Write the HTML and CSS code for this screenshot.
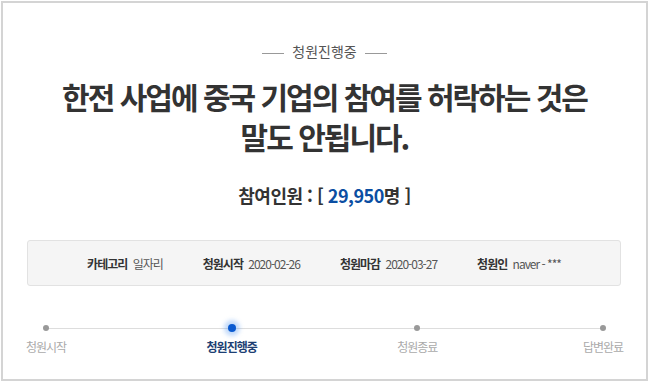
FILE: index.html
```html
<!DOCTYPE html>
<html lang="ko">
<head>
    <meta charset="UTF-8">
    <title>청원진행중</title>
    <link rel="stylesheet" href="styles.css">
</head>
<body>

<div class="petition">
    <div class="status"><span>청원진행중</span></div>

    <h1 class="title">한전 사업에 중국 기업의 참여를 허락하는 것은<br>말도 안됩니다.</h1>

    <div class="count">참여인원 : [ <span class="num">29,950</span>명 ]</div>

    <ul class="info">
        <li><b>카테고리</b> 일자리</li>
        <li><b>청원시작</b> 2020-02-26</li>
        <li><b>청원마감</b> 2020-03-27</li>
        <li><b>청원인</b> naver - ***</li>
    </ul>

    <ol class="steps">
        <li><i class="dot"></i>청원시작</li>
        <li class="on"><i class="dot"></i>청원진행중</li>
        <li><i class="dot"></i>청원종료</li>
        <li><i class="dot"></i>답변완료</li>
    </ol>
</div>

</body>
</html>
```

FILE: styles.css
```css
body {
    margin: 0;
    padding: 1px;
    font-family: "Noto Sans CJK KR", "Noto Sans", sans-serif;
    color: #333;
    background-color: white;
}
.petition {
    width: 643px;
    height: 376px;
    border: 2px solid #d4d4d4;
}
.status {
    margin-top: 38px;
    text-align: center;
    font-size: 14px;
    color: #555;
    line-height: 20px;
}
.status span::before,
.status span::after {
    content: "";
    display: inline-block;
    width: 22px;
    height: 1px;
    background-color: #999;
    vertical-align: middle;
    margin: 0 8px;
}
.title {
    margin: 15px 0 0;
    text-align: center;
    font-size: 30px;
    font-weight: 700;
    line-height: 40px;
    letter-spacing: -2px;
    color: #333;
}
.count {
    margin-top: 26px;
    text-align: center;
    font-size: 18px;
    line-height: 26px;
    font-weight: 700;
    letter-spacing: -0.5px;
    color: #333;
}
.count .num {
    color: #0b4ea2;
}
.info {
    list-style: none;
    margin: 32px 25px 0 24px;
    padding: 0;
    height: 44px;
    background-color: #f5f5f5;
    border: 1px solid #e2e2e2;
    border-radius: 3px;
    display: flex;
    justify-content: center;
    align-items: center;
    gap: 40px;
    font-size: 12px;
    letter-spacing: -1px;
    color: #555;
}
.info b {
    color: #333;
    margin-right: 3px;
}
.steps {
    list-style: none;
    margin: 33px 23px 0 23px;
    padding: 0;
    display: flex;
    justify-content: space-between;
    position: relative;
    font-size: 12px;
    letter-spacing: -1px;
    color: #aaa;
}
.steps::before {
    content: "";
    position: absolute;
    left: 20px;
    right: 20px;
    top: 9px;
    height: 1px;
    background-color: #ddd;
}
.steps li {
    width: 40px;
    display: flex;
    flex-direction: column;
    align-items: center;
    gap: 7px;
    position: relative;
    white-space: nowrap;
}
.dot {
    width: 6px;
    height: 6px;
    margin-top: 6px;
    border-radius: 50%;
    background-color: #999;
}
.steps .on {
    color: #1d3f73;
    font-weight: 700;
}
.steps .on .dot {
    width: 8px;
    height: 8px;
    margin: 5px 0 -1px;
    background-color: #0a5ad0;
    box-shadow: 0 0 4px 4px rgba(80, 150, 240, 0.35);
}
```
